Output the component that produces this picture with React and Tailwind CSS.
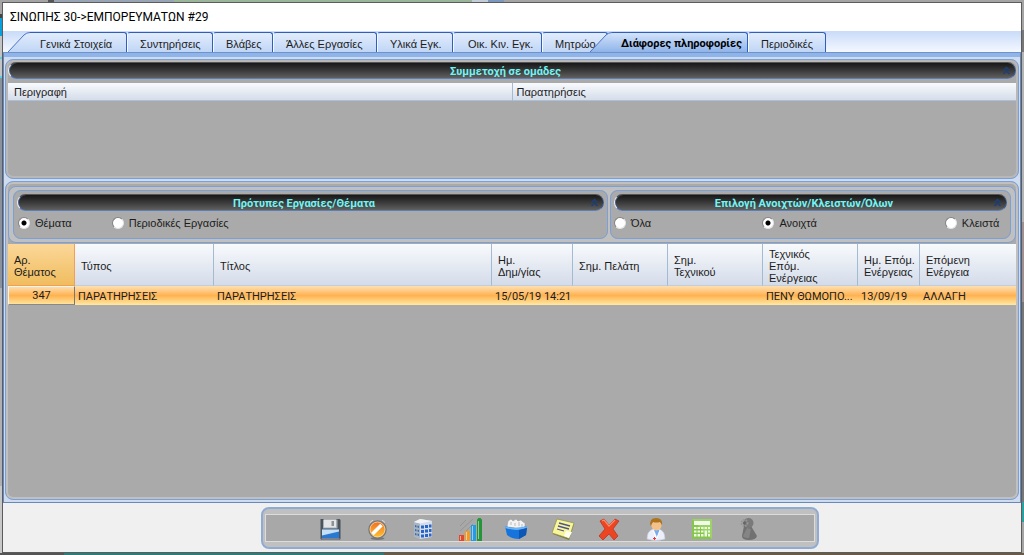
import React, { useState } from 'react';

const TABS = [
  { label: 'Γενικά Στοιχεία', width: 'w-[119px] pl-[32px]', slanted: true },
  { label: 'Συντηρήσεις', width: 'w-[86px] pl-[12px]' },
  { label: 'Βλάβες', width: 'w-[60px] pl-[12px]' },
  { label: 'Άλλες Εργασίες', width: 'w-[104px] pl-[12px]' },
  { label: 'Υλικά Εγκ.', width: 'w-[76px] pl-[12px]' },
  { label: 'Οικ. Κιν. Εγκ.', width: 'w-[89px] pl-[14px]' },
  { label: 'Μητρώο', width: 'w-[66px] pl-[12px]' },
  { label: 'Διάφορες πληροφορίες', width: 'w-[158px] -ml-[18px] pl-[31px]', slanted: true },
  { label: 'Περιοδικές', width: 'w-[78px] pl-[12px]' },
];

const COLUMNS = [
  { label: 'Αρ.\nΘέματος', width: 'w-[67px]' },
  { label: 'Τύπος', width: 'w-[139px]' },
  { label: 'Τίτλος', width: 'w-[278px]' },
  { label: 'Ημ.\nΔημ/γίας', width: 'w-[81px]' },
  { label: 'Σημ. Πελάτη', width: 'w-[95px]' },
  { label: 'Σημ.\nΤεχνικού', width: 'w-[95px]' },
  { label: 'Τεχνικός\nΕπόμ.\nΕνέργειας', width: 'w-[95px]' },
  { label: 'Ημ. Επόμ.\nΕνέργειας', width: 'w-[62px]' },
  { label: 'Επόμενη\nΕνέργεια', width: 'w-[96px]' },
];

const ROWS = [
  ['347', 'ΠΑΡΑΤΗΡΗΣΕΙΣ', 'ΠΑΡΑΤΗΡΗΣΕΙΣ', '15/05/19 14:21', '', '', 'ΠΕΝΥ ΘΩΜΟΠΟ...', '13/09/19', 'ΑΛΛΑΓΗ'],
];

function Tab({ tab, active, onClick }) {
  const fill = active
    ? 'bg-linear-to-b from-[#d3e3fb] to-[#8fb4e9]'
    : 'bg-linear-to-b from-[#e2ecfc] to-[#c0d6f6]';
  return (
    <button
      type="button"
      role="tab"
      aria-selected={active}
      onClick={onClick}
      className={`relative h-[20px] shrink-0 pt-[3px] text-left whitespace-nowrap ${tab.width} ${
        tab.slanted ? '' : `rounded-t-[3px] border-t border-r border-[#2f5fbd] border-l border-l-[#f4f8ff] ${fill}`
      } ${active ? "z-10 font-['Roboto',sans-serif] font-bold text-black" : ''}`}
    >
      {tab.slanted && (
        <span className="absolute inset-0 flex">
          <svg width="22" height="20" viewBox="0 0 22 20" className="shrink-0">
            <defs>
              <linearGradient id={active ? 'slantActive' : 'slant'} x1="0" y1="0" x2="0" y2="1">
                <stop offset="0" stopColor={active ? '#d3e3fb' : '#e2ecfc'} />
                <stop offset="1" stopColor={active ? '#8fb4e9' : '#c0d6f6'} />
              </linearGradient>
            </defs>
            <path d="M0 20 L16 3 Q18.500 .5 22 .5 V20Z" fill={active ? 'url(#slantActive)' : 'url(#slant)'} />
            <path d="M0 20 L16 3 Q18.500 .5 22 .5" fill="none" stroke="#4a74c4" />
          </svg>
          <span className={`flex-1 rounded-tr-[3px] border-t border-r border-[#2f5fbd] ${fill}`} />
        </span>
      )}
      <span className="relative">{tab.label}</span>
    </button>
  );
}

function SectionBar({ title }) {
  return (
    <div className="flex h-[17px] items-center rounded-full border border-t-[#555] border-r-[#3d5f94] border-b-[#5d7fb8] border-l-[#f0f0f0] bg-linear-to-b from-[#181818] to-[#606060] pr-[4px] shadow-[inset_1px_0_0_#3d5f94]">
      <h2 className="flex-1 pt-[2px] text-center font-['Roboto',sans-serif] leading-[14px] font-bold text-[#72f4f4]">
        {title}
      </h2>
      <button type="button" aria-label="Σύμπτυξη">
        <svg width="9" height="9" viewBox="0 0 9 9" fill="none" stroke="#1d3f78" strokeWidth="1.500">
          <path d="M1.500 4.500 4.500 1.500 7.500 4.500M1.500 8 4.500 5 7.500 8" />
        </svg>
      </button>
    </div>
  );
}

function Radio({ name, label, checked, onChange }) {
  return (
    <label className="flex items-center gap-[5px] whitespace-nowrap">
      <input
        type="radio"
        name={name}
        checked={checked}
        onChange={onChange}
        className="size-[12px] shrink-0 appearance-none rounded-full border border-t-[#808080] border-r-[#e4e4e4] border-b-[#e4e4e4] border-l-[#808080] bg-white checked:bg-[radial-gradient(circle,#000_2px,#fff_3px)]"
      />
      {label}
    </label>
  );
}

function SaveIcon() {
  return (
    <>
      <path d="M1.500 1h19l1 1v19l-1 1h-18l-1-1z" fill="#4b535c" />
      <path d="M4 1.500h14.500v9H4z" fill="#a9aeb3" />
      <path d="M5 1.500h12v8H5z" fill="#e3e5e7" />
      <path d="M12.500 3h2.500v5h-2.500z" fill="#8b9196" />
      <path d="M3 11.500h17v8.500H3z" fill="#2b78d0" />
      <path d="M3 11.500h17v2l-17 4z" fill="#c5dff7" />
      <path d="M2.500 21h18" stroke="#a8b4bf" />
    </>
  );
}

function CancelIcon() {
  return (
    <>
      <ellipse cx="11.500" cy="20.500" rx="7" ry="1.500" fill="#777" />
      <circle cx="11.500" cy="11.500" r="8.500" fill="url(#orangeFill)" stroke="#777" strokeWidth="1.500" />
      <circle cx="11.500" cy="11.500" r="7.500" fill="none" stroke="#f8dcae" strokeWidth=".8" />
      <path d="M6.500 16 15.500 7" stroke="#fff" strokeWidth="3.500" />
      <path d="M4 4.500 7 2M16 2l3 2.500" stroke="#ddd" />
    </>
  );
}

function BuildingIcon() {
  return (
    <>
      <path d="M2 4 8 1l12 2v16l-12 2-6-3z" fill="#d3dce8" />
      <path d="M2 4 8 5.500V21l-6-3z" fill="#aab5c3" />
      <path d="m2 4 6-3 12 2-12 2.500z" fill="#f1f3f6" />
      <path d="M9 7.500h3v3H9zM13 7h3v3h-3zM17 6.500h2.500v3H17zM9 12h3v3H9zM13 11.500h3v3h-3zM17 11h2.500v3H17zM9 16.500h3v3H9zM13 16h3v3h-3zM17 15.500h2.500v3H17z" fill="#2964c8" />
      <path d="M3 7l1.500.5v2L3 9zM5.500 7.500 7 8v2l-1.500-.5zM3 11l1.500.5v2L3 13zM5.500 11.500 7 12v2l-1.500-.5zM3 15l1.500.5v2L3 17zM5.500 15.500 7 16v2l-1.500-.5z" fill="#3b6dad" />
    </>
  );
}

function ChartIcon() {
  return (
    <>
      <path d="M1 13 14 1M1 8l6-6M7 13l7-7" stroke="#959595" />
      <path d="M0 17h5v6H0z" fill="#e2492a" />
      <path d="M6 13h5v10H6z" fill="#f29a25" />
      <path d="M12 7h5v16h-5z" fill="#279be2" />
      <path d="M18 1.500 19.500 0h2L23 1.500V23h-5z" fill="#26953a" />
      <path d="M1.500 18v4M7.500 14v8M13.500 8v14M19.500 3v18" stroke="#fff" strokeOpacity=".5" />
    </>
  );
}

function CardBoxIcon() {
  return (
    <>
      <path d="m2 9 1-6 3-2 2 2 3-2 2 2 3-1 2 2 2 1v6z" fill="#f3f3f3" stroke="#999" strokeWidth=".5" />
      <path d="M6 4v3M10 5v3M14 4v4M17 6v3" stroke="#bbb" />
      <path d="M0 8q10 4 22 0l-1 9-7 4q-7 0-12-4z" fill="#1774dc" />
      <path d="M0 8q10 4 22 0l-.3 2q-10 4-21.400 0z" fill="#69b4f7" />
      <path d="m14 12v9l7-4 1-7z" fill="#0d56b6" />
    </>
  );
}

function NoteIcon() {
  return (
    <>
      <path d="m5 2 17 4-5 16-16-6z" fill="#77793c" />
      <path d="m5 1 17 4-5 15.500L0 15z" fill="#f8f59b" stroke="#8e8e48" strokeWidth=".7" />
      <path d="m12 18 2-5 6 1-3 6z" fill="#fffff0" />
      <path d="m7 5 11 3M6 8l11 3M5 11l7 2" stroke="#4f5588" strokeWidth="1.300" />
    </>
  );
}

function DeleteIcon() {
  return (
    <>
      <path d="m2 3 4-2 5 6 6-6 4 2-6 8 5 7-4 4-5-6-6 6-4-4 6-7z" fill="#ec4524" stroke="#b4301b" strokeWidth=".7" />
      <path d="m4 3 2-1 5 6 6-6" fill="none" stroke="#ff8a65" strokeWidth="1.200" />
    </>
  );
}

function DoctorIcon() {
  return (
    <>
      <path d="M2 21q0-8 6-10h6q6 2 6 10-9 3-18 0z" fill="#eceffa" stroke="#c3c8df" strokeWidth=".6" />
      <path d="m9 12 3 7 3-7z" fill="#74aef2" />
      <circle cx="11.500" cy="7.500" r="5" fill="#f4c18b" />
      <path d="M5.500 8Q4 0 11 0q7 0 6 7l-2-3q-4 1-7 0z" fill="#ad731d" />
      <path d="M9.500 19v3M8 20.500h3" stroke="#e33" />
      <path d="m8 12 3 8M15 12l-3 8" stroke="#fff" />
    </>
  );
}

function CalculatorIcon() {
  return (
    <>
      <path d="M1 1h20v20H1z" fill="#86c64c" />
      <path d="M1 1h20v20z" fill="#9bd464" />
      <path d="M3 3h16v4H3z" fill="#f1faea" />
      <path d="M3 9h2.500v2H3zM6.500 9H9v2H6.500zM10 9h2.500v2H10zM13.500 9H16v2h-2.500zM17 9h2v2h-2zM3 12.500h2.500v2H3zM6.500 12.500H9v2H6.500zM10 12.500h2.500v2H10zM13.500 12.500H16v6h-2.500zM17 12.500h2v2h-2zM3 16h2.500v2.500H3zM6.500 16H9v2.500H6.500zM10 16h2.500v2.500H10zM17 16h2v2.500h-2z" fill="#effae4" />
    </>
  );
}

function PawnIcon() {
  return (
    <>
      <path d="M6 8h7l6 10q-1 4-8 4t-7-4z" fill="#717171" />
      <circle cx="10.500" cy="5" r="5" fill="#7a7a7a" />
      <path d="m9 10 4 1-2 9q-5 0-6-2z" fill="#858585" />
      <circle cx="6.500" cy="5" r="3" fill="none" stroke="#959595" strokeWidth="2" strokeDasharray="1.500 1" />
      <circle cx="6.500" cy="5" r="1.500" fill="#666" />
    </>
  );
}

const TOOLS = [
  { label: 'Αποθήκευση', Icon: SaveIcon },
  { label: 'Ακύρωση', Icon: CancelIcon },
  { label: 'Κτίριο', Icon: BuildingIcon },
  { label: 'Στατιστικά', Icon: ChartIcon },
  { label: 'Αρχείο', Icon: CardBoxIcon },
  { label: 'Σημειώσεις', Icon: NoteIcon },
  { label: 'Διαγραφή', Icon: DeleteIcon },
  { label: 'Τεχνικός', Icon: DoctorIcon },
  { label: 'Υπολογισμοί', Icon: CalculatorIcon },
  { label: 'Ρυθμίσεις', Icon: PawnIcon },
];

export default function App() {
  const [activeTab, setActiveTab] = useState(7);
  const [kind, setKind] = useState('Θέματα');
  const [status, setStatus] = useState('Ανοιχτά');

  return (
    <div className="flex h-screen flex-col bg-[#a4a4a4] font-['Liberation_Sans',Arial,sans-serif] text-[11px] leading-[12px] text-[#1c1c1c]">
      {/* Slivers of the window behind the dialog */}
      <div className="flex h-[2px] shrink-0">
        <div className="w-[48px] bg-[#a4a4a4]" />
        <div className="w-[6px] bg-[#555]" />
        <div className="w-[120px] bg-[#98a4b4]" />
        <div className="w-[298px] bg-[#9bb59b]" />
        <div className="w-[16px] bg-[#c4ccd8]" />
        <div className="w-[16px] bg-[#7d98bd]" />
      </div>

      <div className="flex min-h-0 flex-1">
        <div className="flex w-[2px] shrink-0 flex-col">
          <div className="h-[12px]" />
          <div className="h-[4px] bg-[#444]" />
          <div className="h-[18px] bg-[#0aa0dc]" />
          <div className="h-[21px] bg-[#c4c4c4]" />
          <div className="h-[2px] bg-[#58d0e0]" />
          <div className="h-[17px] bg-[#c4c4c4]" />
          <div className="h-[2px] bg-[#58d0e0]" />
          <div className="h-[210px] bg-[#8b929c]" />
          <div className="h-[198px] bg-[#b0b0b0]" />
          <div className="flex-1 bg-[#c8c8c8]" />
        </div>

        <main className="flex min-w-0 flex-1 flex-col border border-[#5c5c5c] bg-[#f0f0f0]">
          <h1 className="h-[28px] shrink-0 bg-white pt-[6px] pl-[7px] font-['Roboto','Noto_Sans',sans-serif] text-[12px] leading-[16px] text-black">
            ΣΙΝΩΠΗΣ 30-&gt;ΕΜΠΟΡΕΥΜΑΤΩΝ #29
          </h1>

          <div role="tablist" className="flex h-[22px] shrink-0 items-end border-b border-[#6f93c9] bg-linear-to-b from-[#c9dbf8] to-[#f4f8ff] pl-[5px]">
            {TABS.map((tab, i) => (
              <Tab key={tab.label} tab={tab} active={i === activeTab} onClick={() => setActiveTab(i)} />
            ))}
          </div>

          <div className="flex min-h-0 flex-1 flex-col gap-[2px] border-x border-b border-[#6688bb] bg-[#cfdcf0] px-px pb-[2px]">
            <div className="-mx-px h-[4px] shrink-0 bg-[#8fb4e9]" />

            <section className="h-[120px] shrink-0 rounded-[8px] border border-[#7ba0d8] bg-[#aaa] px-[2px] pt-[2px] shadow-[inset_0_0_0_2px_#b8b8b8]">
              <SectionBar title="Συμμετοχή σε ομάδες" />
              <table className="mt-[4px] w-full table-fixed border-collapse bg-linear-to-b from-[#f8fafc] to-[#d5ddea]">
                <thead>
                  <tr className="h-[17px] border-b border-[#a9c0dc] text-left">
                    <th className="border-r border-[#a3bad3] pt-[2px] pl-[6px] font-normal">Περιγραφή</th>
                    <th className="pt-[2px] pl-[4px] font-normal">Παρατηρήσεις</th>
                  </tr>
                </thead>
              </table>
            </section>

            <section className="flex min-h-0 flex-1 flex-col rounded-[8px] border border-[#7ba0d8] bg-[#aaa] px-[2px] pt-[4px] shadow-[inset_0_0_0_2px_#c0c0c0]">
              <div className="flex h-[57px] shrink-0 gap-[2px] rounded-[8px] border border-[#7ba0d8] bg-[#c0c0c0] px-[4px] py-[3px]">
                <fieldset className="min-w-0 flex-[596] rounded-[8px] border border-[#7ba0d8] bg-[#aaa] px-[3px] pt-[3px]">
                  <SectionBar title="Πρότυπες Εργασίες/Θέματα" />
                  <div className="flex gap-[40px] pt-[6px] pl-px">
                    {['Θέματα', 'Περιοδικές Εργασίες'].map((item) => (
                      <Radio key={item} name="kind" label={item} checked={kind === item} onChange={() => setKind(item)} />
                    ))}
                  </div>
                </fieldset>
                <fieldset className="min-w-0 flex-[399] rounded-[8px] border border-[#7ba0d8] bg-[#aaa] px-[3px] pt-[3px]">
                  <SectionBar title="Επιλογή Ανοιχτών/Κλειστών/Όλων" />
                  <div className="grid grid-cols-[148fr_182fr_62fr] pt-[6px]">
                    {['Όλα', 'Ανοιχτά', 'Κλειστά'].map((item) => (
                      <Radio key={item} name="status" label={item} checked={status === item} onChange={() => setStatus(item)} />
                    ))}
                  </div>
                </fieldset>
              </div>

              <table className="mt-px w-full table-fixed border-separate border-spacing-0">
                <thead>
                  <tr className="h-[42px] bg-linear-to-b from-[#f8fafc] to-[#d3dbe9] text-left">
                    {COLUMNS.map((col, i) => (
                      <th
                        key={col.label}
                        className={`border-r border-b pt-[2px] pl-[6px] font-normal whitespace-pre-line last:border-r-0 ${col.width} ${
                          i === 0
                            ? 'border-[#f0a050] bg-linear-to-b from-[#fbd798] to-[#f0bd5e]'
                            : 'border-r-[#a3bad3] border-b-[#c5cdd8]'
                        }`}
                      >
                        {col.label}
                      </th>
                    ))}
                  </tr>
                </thead>
                <tbody className="font-['Roboto',sans-serif]">
                  {ROWS.map((row) => (
                    <tr key={row[0]} className="h-[19px] bg-linear-to-b from-[#fde0b0] via-[#ffb24f] to-[#ffe9a2]">
                      {row.map((cell, i) => (
                        <td
                          key={i}
                          className={
                            i === 0
                              ? 'border border-t-[#f4f4f4] border-r-[#777] border-b-[#888] border-l-[#f4f4f4] text-center'
                              : 'pt-[2px] pl-[3px] whitespace-nowrap'
                          }
                        >
                          {cell}
                        </td>
                      ))}
                    </tr>
                  ))}
                </tbody>
              </table>
            </section>
          </div>

          <footer className="flex h-[49px] shrink-0 items-center justify-center pl-[56px]">
            <div className="w-[558px] rounded-[8px] border-2 border-[#8fabd4] bg-[#c0c0c0] px-[2px] py-[5px]">
              <div className="flex h-[28px] items-end justify-between border border-[#dcdcdc] bg-[#a8a8a8] px-[53px]">
                {TOOLS.map(({ label, Icon }) => (
                  <button key={label} type="button" title={label} aria-label={label}>
                    <svg width="23" height="23" viewBox="0 0 23 23" fill="none" className="block">
                      <defs>
                        <linearGradient id="orangeFill" x1="0" y1="0" x2="0" y2="1">
                          <stop offset="0" stopColor="#ef6a25" />
                          <stop offset="1" stopColor="#ffc62e" />
                        </linearGradient>
                      </defs>
                      <Icon />
                    </svg>
                  </button>
                ))}
              </div>
            </div>
          </footer>
        </main>

        <div className="flex w-[2px] shrink-0 flex-col">
          <div className="h-[28px] bg-[#a4a4a4]" />
          <div className="h-[22px] bg-[#777]" />
          <div className="h-[170px] bg-[#b4b4b4]" />
          <div className="h-[80px] bg-[#a09090]" />
          <div className="h-[200px] bg-[#777]" />
          <div className="h-[20px] bg-[#2aa0a0]" />
        </div>
      </div>
      <div className="flex h-[2px] shrink-0">
        <div className="w-[64px] bg-[#555]" />
        <div className="w-[320px] bg-[#2a7d7d]" />
        <div className="flex-1 bg-[#6b5b45]" />
      </div>
    </div>
  );
}
